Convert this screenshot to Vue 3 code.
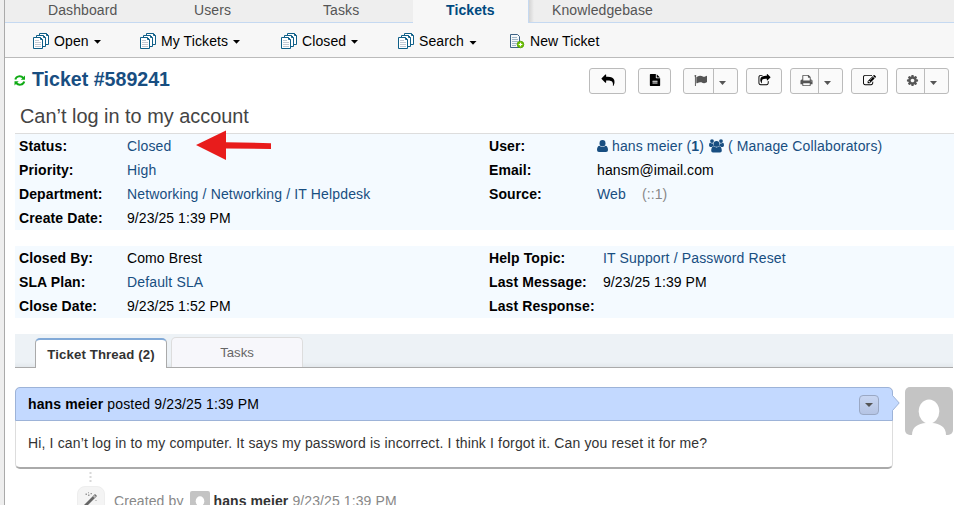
<script setup>
const tabs = [
  { name: 'Dashboard', cls: 't-dash' },
  { name: 'Users', cls: 't-users' },
  { name: 'Tasks', cls: 't-tasks' },
  { name: 'Tickets', cls: 't-tickets active' },
  { name: 'Knowledgebase', cls: 't-kb' },
]
const queues = [
  { name: 'Open', cls: 'q-open' },
  { name: 'My Tickets', cls: 'q-my' },
  { name: 'Closed', cls: 'q-closed' },
  { name: 'Search', cls: 'q-search' },
]
const icons = {
  reply: 'M1792 1120q0 166-127 451-3 7-10.5 24t-13.5 30-13 22q-12 17-28 17-15 0-23.5-10t-8.5-25q0-9 2.5-26.5t2.5-23.5q5-68 5-123 0-101-17.5-181t-48.5-138.5-80-101-105.5-69.5-133-42.5-154-21.5-175.5-6h-224v256q0 26-19 45t-45 19-45-19l-512-512q-19-19-19-45t19-45l512-512q19-19 45-19t45 19 19 45v256h224q713 0 875 403 53 134 53 333z',
  file: 'M1596 476q14 14 28 36h-472v-472q22 14 36 28zm-476 164h544v1056q0 40-28 68t-68 28h-1344q-40 0-68-28t-28-68v-1600q0-40 28-68t68-28h800v544q0 40 28 68t68 28zm160 736v-64q0-14-9-23t-23-9h-704q-14 0-23 9t-9 23v64q0 14 9 23t23 9h704q14 0 23-9t9-23zm0-256v-64q0-14-9-23t-23-9h-704q-14 0-23 9t-9 23v64q0 14 9 23t23 9h704q14 0 23-9t9-23z',
  flag: 'M320 256q0 72-64 110v1266q0 13-9.5 22.5t-22.5 9.5h-64q-13 0-22.5-9.5t-9.5-22.5v-1266q-64-38-64-110 0-53 37.5-90.5t90.5-37.5 90.5 37.5 37.5 90.5zm1472 64v763q0 25-12.5 38.5t-39.5 27.5q-215 116-369 116-61 0-123.5-22t-108.5-48-115.5-48-142.5-22q-192 0-464 146-17 9-33 9-26 0-45-19t-19-45v-742q0-32 31-55 21-14 79-43 236-120 421-120 107 0 200 29t219 88q38 19 88 19 54 0 117.5-21t110-47 88-47 54.5-21q26 0 45 19t19 45z',
  share: 'M1472 989v259q0 119-84.5 203.5t-203.5 84.5h-832q-119 0-203.5-84.5t-84.5-203.5v-832q0-119 84.5-203.5t203.5-84.5h255q13 0 22.5 9.5t9.5 22.5q0 27-26 32-77 26-133 60-10 4-16 4h-112q-66 0-113 47t-47 113v832q0 66 47 113t113 47h832q66 0 113-47t47-113v-214q0-19 18-29 28-13 54-37 16-16 35-8 21 9 21 29zm237-496l-384 384q-18 19-45 19-12 0-25-5-39-17-39-59v-192h-160q-323 0-438 131-119 137-74 473 3 23-20 34-8 2-12 2-16 0-26-13-10-14-21-31t-39.5-68.5-49.5-99.5-38.5-114-17.5-122q0-49 3.5-91t14-90 28-88 47-81.5 68.5-74 94.5-61.5 124.5-48.5 159.5-30.5 196.5-11h160v-192q0-42 39-59 13-5 25-5 26 0 45 19l384 384q19 19 19 45t-19 45z',
  print: 'M448 1536h896v-256h-896v256zm0-640h896v-384h-160q-40 0-68-28t-28-68v-160h-640v640zm1152 64q0-26-19-45t-45-19-45 19-19 45 19 45 45 19 45-19 19-45zm128 0v416q0 13-9.5 22.5t-22.5 9.5h-224v160q0 40-28 68t-68 28h-960q-40 0-68-28t-28-68v-160h-224q-13 0-22.5-9.5t-9.5-22.5v-416q0-79 56.5-135.5t135.5-56.5h64v-544q0-40 28-68t68-28h672q40 0 88 20t76 48l152 152q28 28 48 76t20 88v256h64q79 0 135.5 56.5t56.5 135.5z',
  edit: 'M888 1184l116-116-152-152-116 116v56h96v96h56zm440-720q-16-16-33 1l-350 350q-17 17-1 33t33-1l350-350q17-17 1-33zm80 594v190q0 119-84.5 203.5t-203.5 84.5h-832q-119 0-203.5-84.5t-84.5-203.5v-832q0-119 84.5-203.5t203.5-84.5h832q63 0 117 25 15 7 18 23 3 17-9 29l-49 49q-14 14-32 8-23-6-45-6h-832q-66 0-113 47t-47 113v832q0 66 47 113t113 47h832q66 0 113-47t47-113v-126q0-13 9-22l64-64q15-15 35-7t20 29zm-96-738l288 288-672 672h-288v-288zm444 132l-92 92-288-288 92-92q28-28 68-28t68 28l152 152q28 28 28 68t-28 68z',
  cog: 'M1152 896q0-106-75-181t-181-75-181 75-75 181 75 181 181 75 181-75 75-181zm512-109v222q0 12-8 23t-20 13l-185 28q-19 54-39 91 35 50 107 138 10 12 10 25t-9 23q-27 37-99 108t-94 71q-12 0-26-9l-138-108q-44 23-91 38-16 136-29 186-7 28-36 28h-222q-14 0-24.5-8.5t-11.5-21.5l-28-184q-49-16-90-37l-141 107q-10 9-25 9-14 0-25-11-126-114-165-168-7-10-7-23 0-12 8-23 15-21 51-66.5t54-70.5q-27-50-41-99l-183-27q-13-2-21-12.5t-8-23.5v-222q0-12 8-23t19-13l186-28q14-46 39-92-40-57-107-138-10-12-10-24 0-10 9-23 26-36 98.5-107.5t94.5-71.5q13 0 26 10l138 107q44-23 91-38 16-136 29-186 7-28 36-28h222q14 0 24.5 8.5t11.5 21.5l28 184q49 16 90 37l142-107q9-9 24-9 13 0 25 10 129 119 165 170 7 8 7 22 0 12-8 23-15 21-51 66.5t-54 70.5q26 50 41 98l183 28q13 2 21 12.5t8 23.5z',
}
const actions = [
  { icon: 'reply', cls: 'w37 wide' },
  { icon: 'file', cls: 'w33 wide' },
  { icon: 'flag', cls: 'split w55' },
  { icon: 'share', cls: 'w36' },
  { icon: 'print', cls: 'split w53' },
  { icon: 'edit', cls: 'w37' },
  { icon: 'cog', cls: 'split w53' },
]
const left1 = [
  ['Status:', 'Closed', 'link'],
  ['Priority:', 'High', 'link'],
  ['Department:', 'Networking / Networking / IT Helpdesk', 'link'],
  ['Create Date:', '9/23/25 1:39 PM', 'date'],
]
const left2 = [
  ['Closed By:', 'Como Brest', ''],
  ['SLA Plan:', 'Default SLA', 'link'],
  ['Close Date:', '9/23/25 1:52 PM', 'date'],
]
const right2 = [
  ['Help Topic:', 'IT Support / Password Reset', 'link'],
  ['Last Message:', '9/23/25 1:39 PM', 'date'],
  ['Last Response:', '', ''],
]
</script>

<template>
  <div class="page">
    <nav class="nav">
      <div v-for="t in tabs" :key="t.name" class="tab" :class="t.cls"><span>{{ t.name }}</span></div>
    </nav>
    <div class="subnav">
      <div v-for="q in queues" :key="q.name" class="queue" :class="q.cls">
        <svg class="pages" width="17" height="16" viewBox="0 0 17 16">
          <g fill="#fff" stroke="#0f5f88" stroke-width="1">
            <path d="M6.500 .5H13.500L15.500 2.500V11.500H6.500Z" />
            <path d="M3.500 2.500H10.500L12.500 4.500V13.500H3.500Z" />
            <path d="M.5 4.500H7.500L9.500 6.500V15.500H.5Z" />
          </g>
          <path d="M7.500 4.500V6.500H9.500M10.500 2.500V4.500H12.500M13.500 .5V2.500H15.500" fill="none" stroke="#0f5f88" />
          <path d="M2 7.500H6M2 9.500H8M2 11.500H8M2 13.500H8" stroke="#c3c9d3" />
        </svg>
        <span>{{ q.name }}</span>
        <svg class="caret" width="7" height="4" viewBox="0 0 7 4"><path d="M0 0H7L3.500 3.800Z" /></svg>
      </div>
      <div class="queue q-new">
        <svg class="pages" width="15" height="15" viewBox="0 0 15 15">
          <path d="M.5 .5H7.500L9.500 2.500V13.500H.5Z" fill="#f5f8fa" stroke="#3d6285" />
          <path d="M2 3.500H7M2 5.500H8M2 7.500H8M2 9.500H7M2 11.500H6" stroke="#9fb6c6" />
          <circle cx="10.500" cy="10.500" r="3.300" fill="#6fc400" stroke="#4c9a00" stroke-width=".8" />
          <path d="M10.500 8.700V12.300M8.700 10.500H12.300" stroke="#fff" stroke-width="1.200" />
        </svg>
        <span>New Ticket</span>
      </div>
    </div>

    <header class="head">
      <h2>
        <svg width="12" height="11" viewBox="0 0 12 11">
          <g fill="none" stroke="#0faa14" stroke-width="2">
            <path d="M1.300 4.500C2.200 1 6.800 .2 9.300 3" />
            <path d="M10.200 6.500C9.300 10 4.700 10.800 2.200 8" />
          </g>
          <path d="M11 .5V4.700H6.800ZM.5 10.500V6.300H4.700Z" fill="#0faa14" />
        </svg>
        <span>Ticket #589241</span>
      </h2>
      <div class="actions">
        <div v-for="a in actions" :key="a.icon" class="btn" :class="a.cls">
          <span class="main">
            <svg :class="'i-' + a.icon" width="13" height="13" viewBox="0 0 1792 1792"><path :d="icons[a.icon]" /></svg>
          </span>
          <span v-if="a.cls.includes('split')" class="drop">
            <svg width="7" height="4" viewBox="0 0 7 4"><path d="M0 0H7L3.500 4Z" /></svg>
          </span>
        </div>
      </div>
    </header>
    <h3 class="subject">Can’t log in to my account</h3>

    <section class="info first">
      <div class="col">
        <div v-for="r in left1" :key="r[0]" class="row">
          <b>{{ r[0] }}</b><span :class="r[2]">{{ r[1] }}</span>
        </div>
        <svg class="arrow" width="76" height="31" viewBox="0 0 76 31">
          <path d="M0 15L30 .5V12.200L75 13.200V19L30 18.500V30Z" fill="#e81c1c" />
        </svg>
      </div>
      <div class="col">
        <div class="row">
          <b>User:</b>
          <span class="link user">
            <svg width="11" height="12" viewBox="0 0 11 12">
              <ellipse cx="5.500" cy="3.200" rx="3" ry="3.200" />
              <path d="M0 10C0 7.300 1 5.800 2.500 5.700Q5.500 8.200 8.500 5.700C10 5.800 11 7.300 11 10Q11 12 9 12H2Q0 12 0 10Z" />
            </svg>
            <span class="uname">hans meier (<b>1</b>)</span>
            <svg width="15" height="14" viewBox="0 0 15 14">
              <circle cx="3" cy="2.100" r="1.900" /><circle cx="12" cy="2.100" r="1.900" />
              <circle cx="7.500" cy="4.900" r="2.900" />
              <path d="M0 6.200Q0 3.700 1 3.700Q3 5 4.200 4.200Q4 6 5 7Q3.500 7 2.700 8H1.400Q0 8 0 6.200ZM15 6.200Q15 3.700 14 3.700Q12 5 10.800 4.200Q11 6 10 7Q11.500 7 12.300 8H13.600Q15 8 15 6.200Z" />
              <path d="M2.200 11.800C2.200 9 3.200 7.400 4.700 7.300Q7.500 9.600 10.300 7.300C11.800 7.400 12.800 9 12.800 11.800Q12.800 13.600 11 13.600H4Q2.200 13.600 2.200 11.800Z" />
            </svg>
            <span class="collab">( Manage Collaborators)</span>
          </span>
        </div>
        <div class="row"><b>Email:</b><span>hansm@imail.com</span></div>
        <div class="row"><b>Source:</b><span class="link">Web</span><span class="ip">(::1)</span></div>
      </div>
    </section>

    <section class="info second">
      <div class="col">
        <div v-for="r in left2" :key="r[0]" class="row">
          <b>{{ r[0] }}</b><span :class="r[2]">{{ r[1] }}</span>
        </div>
      </div>
      <div class="col right">
        <div v-for="r in right2" :key="r[0]" class="row">
          <b>{{ r[0] }}</b><span :class="r[2]">{{ r[1] }}</span>
        </div>
      </div>
    </section>

    <div class="tabs">
      <div class="ttab on">Ticket Thread (2)</div>
      <div class="ttab">Tasks</div>
    </div>

    <div class="thread">
      <article class="entry">
        <div class="ehead">
          <span><b>hans meier</b> posted 9/23/25 1:39 PM</span>
          <span class="more"><svg width="8" height="4" viewBox="0 0 8 4"><path d="M0 0H8L4 4Z" /></svg></span>
          <svg class="point" width="8" height="16" viewBox="0 0 8 16">
            <path d="M0 0L7.200 8L0 16Z" fill="#c3d9ff" /><path d="M.5 .5L7.200 8L.5 15.500" fill="none" stroke="#9db3d8" />
          </svg>
        </div>
        <div class="ebody">Hi, I can’t log in to my computer. It says my password is incorrect. I think I forgot it. Can you reset it for me?</div>
      </article>
      <svg class="avatar" width="48" height="48" viewBox="0 0 48 48">
        <rect width="48" height="48" rx="5" fill="#c4c4c4" />
        <ellipse cx="24" cy="24.500" rx="10.300" ry="12" fill="#fff" />
        <path d="M7 48C7 40 13 36.500 21 36H27C35 36.500 41 40 41 48Z" fill="#fff" />
      </svg>
    </div>

    <div class="event">
      <div class="marker">
        <svg class="dots" width="3" height="10" viewBox="0 0 3 10"><path d="M.5 0H2.500V2H.5ZM.5 4H2.500V6H.5ZM.5 8H2.500V10H.5Z" fill="#d8d8d8" /></svg>
        <span class="badge">
          <svg width="16" height="16" viewBox="0 0 16 16">
            <path d="M1.500 14.500L13 3" stroke="#666" stroke-width="2.800" />
            <path d="M10 4.600L11.400 6L13 4.400L11.600 3Z" fill="#bbb" />
            <path d="M2.500 1.500H4V3H2.500ZM5 2.500H6.500V4H5ZM7.500 1H9V2.300H7.500ZM5 .3H6V1.200H5ZM12.500 8H13.500V9H12.500Z" fill="#999" />
          </svg>
        </span>
      </div>
      <div class="etext">
        <span>Created by</span>
        <svg width="20" height="20" viewBox="0 0 48 48">
          <rect width="48" height="48" rx="5" fill="#c4c4c4" />
          <ellipse cx="24" cy="24.500" rx="10.300" ry="12" fill="#fff" />
          <path d="M7 48C7 40 13 36.500 21 36H27C35 36.500 41 40 41 48Z" fill="#fff" />
        </svg>
        <span><b>hans meier</b> 9/23/25 1:39 PM</span>
      </div>
    </div>
  </div>
</template>

<style>
body { background: #eee; overflow: hidden; }
</style>

<style scoped>
* { box-sizing: border-box; }
svg { display: block; flex: none; }
.page {
  height: 505px; margin-left: 4px; border-left: 1px solid #aaa; background: #fff; overflow: hidden;
  font: 14px/24px "Liberation Sans", Arial, sans-serif; color: #000; white-space: nowrap; letter-spacing: .1px;
}
.nav { display: flex; height: 23px; background: #eee; color: #555; line-height: 20px; }
.tab { border-bottom: 1px solid #c5d9f1; height: 23px; flex: none; }
.t-dash { width: 189px; padding-left: 43px; }
.t-users { width: 129px; }
.t-tasks { width: 90px; }
.t-tickets { width: 116px; padding-left: 33px; }
.tab.active { background: #f7f7f7; border-bottom: 0; border-right: 1px solid #c5d9f1; color: #004a80; font-weight: bold; }
.t-kb { flex: 1; padding-left: 23px; background: linear-gradient(90deg, #d4d4d4, #eee 5px); }
.subnav { display: flex; height: 35px; background: #f7f7f7; border-bottom: 1px solid #bbb; padding-left: 28px; line-height: 36px; }
.queue { display: flex; flex: none; }
.queue .pages { margin: 10px 4px 0 0; }
.queue .caret { margin: 17px 0 0 5px; }
.q-open { width: 107px; }
.q-my { width: 141px; }
.q-closed { width: 117px; }
.q-search { width: 112px; }
.q-search .caret { width: 8px; margin: 18px 0 0 5px; }
.q-new .pages { margin: 11px 5px 0 0; }

.head { display: flex; justify-content: space-between; padding: 10px 5px 0 9px; height: 44px; }
h2 { display: flex; margin: 0; font-size: 19.6px; line-height: 22px; color: #184e81; letter-spacing: 0; }
h2 svg { margin: 7px 6px 0 0; }
.actions { display: flex; gap: 8px; }
.btn { display: flex; height: 26px; border: 1px solid #bbb; border-radius: 3px; background: #fafafa; fill: #000; }
.btn.wide { margin-right: 4px; }
.w37 { width: 37px; } .w33 { width: 33px; } .w36 { width: 36px; } .w55 { width: 55px; } .w53 { width: 53px; }
.main { flex: 1; display: flex; justify-content: center; padding-top: 5px; }
.split { fill: #555; }
.split .main { padding-left: 3px; }
.i-reply { width: 14px; }
.i-file { width: 12px; height: 12px; }
.drop { width: 24px; border-left: 1px solid #bbb; display: flex; padding: 12px 0 0 5px; }
.subject { margin: 0; height: 31px; padding: 2px 0 0 15px; font-size: 19.9px; font-weight: normal; line-height: 24px; color: #444; letter-spacing: 0; }

.info { display: grid; grid-template-columns: 470px 1fr; margin-left: 10px; background: #f4faff; }
.first { height: 97px; border-top: 1px solid #ddd; }
.second { margin-top: 16px; height: 72px; }
.col { position: relative; padding-left: 4px; }
.row { display: flex; height: 24px; }
.row > b { width: 108px; flex: none; }
.right .row > b { width: 114px; }
.link { color: #184e81; letter-spacing: .15px; }
.date { letter-spacing: .06px; }
.arrow { position: absolute; left: 181px; top: -4px; }
.user { display: flex; fill: #184e81; }
.user svg { margin-top: 6px; }
.user svg + span { margin-left: 4px; }
.uname { letter-spacing: .12px; }
.uname + svg { margin-left: 5px; margin-top: 5px; }
.ip { color: #888; margin-left: 16px; }

.tabs { display: flex; gap: 4px; height: 34px; margin: 16px 1px 0 10px; padding-left: 20px; background: linear-gradient(#edf2f6 28px, #e3e8ec); border-bottom: 1px solid #aaa; }
.ttab { width: 132px; height: 30px; margin-top: 3px; border: 1px solid #ddd; border-bottom: 0; border-radius: 5px 5px 0 0; background: #f7f7fb; font-size: 13.200px; line-height: 29px; text-align: center; color: #666; letter-spacing: 0; }
.ttab.on { margin-top: 4px; background: #fff; border-color: #aaa; border-top: 2px solid #81a9d7; font-weight: bold; color: #333; letter-spacing: .12px; }

.thread { display: flex; gap: 12px; margin: 19px 1px 0 10px; }
.entry { width: 878px; height: 82px; border: 1px solid #ddd; border-top: 0; border-bottom: 2px solid #aaa; border-radius: 5px; }
.ehead { position: relative; display: flex; justify-content: space-between; height: 34px; margin: 0 -1px; padding: 0 13px 0 12px; border: 1px solid #9db3d8; border-radius: 5px 5px 0 0; background: #c3d9ff; line-height: 33px; letter-spacing: .14px; }
.more { display: flex; justify-content: center; width: 20px; height: 20px; margin-top: 7px; padding-top: 7px; border: 1px solid #9aa8c4; border-radius: 4px; background: linear-gradient(#c8d6f2, #b5c4e4); fill: #555; }
.point { position: absolute; right: -8px; top: 7px; }
.ebody { padding: 10px 12px; color: #333; letter-spacing: .15px; }

.event { display: flex; margin: 3px 0 0 72px; }
.marker { width: 28px; }
.dots { margin: 0 0 4px 12px; }
.badge { display: flex; justify-content: center; width: 28px; height: 28px; padding-top: 5px; border: 1px solid #eee; border-radius: 8px; background: #f4f4f4; }
.etext { display: flex; padding: 17px 0 0 9px; color: #888; }
.etext svg { margin: 2px 3px 0 7px; }
.etext b { color: #333; }
</style>
